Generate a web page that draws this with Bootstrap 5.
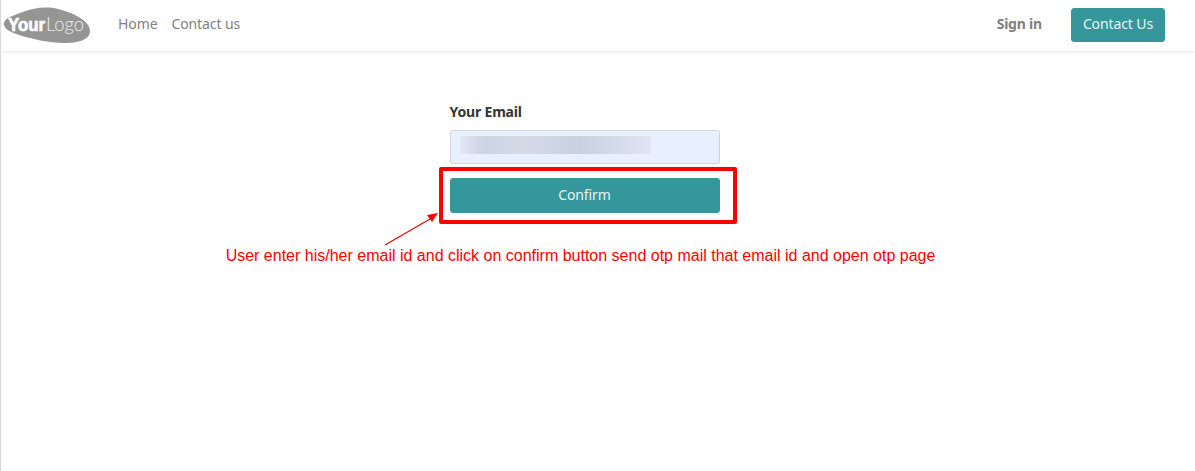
<!DOCTYPE html>
<html lang="en">
<head>
<meta charset="utf-8">
<title>Your Email</title>
<link href="https://cdn.jsdelivr.net/npm/bootstrap@5.3.0/dist/css/bootstrap.min.css" rel="stylesheet">
<style>
html,body{height:100%;overflow:hidden}
body{background:#fff;font-family:"Noto Sans",sans-serif;font-size:14px;color:#212529;border-left:1px solid #d8d8d8}
.top-bar{height:51px;padding:0 30px 0 0;box-shadow:0 1px 3px rgba(0,0,0,.1);background:#fff}
.logo-svg{display:block;width:90px;height:51px;flex:none}
.top-link{font-size:14px;line-height:20px;color:#808080;text-decoration:none;letter-spacing:-.1px;padding-bottom:4px}
.top-links{margin-left:27px;gap:14px}
.sign-link{font-size:14px;line-height:20px;font-weight:700;color:#808080;text-decoration:none;margin-right:29px;letter-spacing:-.2px;padding-bottom:4px}
.teal-btn{background:#35979c;border:1px solid #35979c;color:#e6f4f4;border-radius:3px;font-size:14px;letter-spacing:-.1px}
.teal-btn:hover{background:#35979c;border-color:#35979c;color:#e6f4f4}
.head-btn{width:94px;height:34px;padding:0 0 4px;margin-top:-1px}
.page-area{width:1167px;padding-top:50px}
.form-box{width:270px;position:relative}
.mail-label{display:block;font-size:14px;font-weight:700;line-height:21px;margin-bottom:8px;letter-spacing:-.17px;color:#333}
.mail-field{height:34px;padding:5px 9px;background:#e8f0fe;border:1px solid #cdd5e0;border-radius:3px;margin-bottom:14px}
.mail-blur{width:191px;height:18px;background:linear-gradient(90deg,#e2e8f3 0,#cdd5e2 12%,#d4dbe7 35%,#c9d1de 62%,#d6ddea 85%,#dfe6f2 100%);filter:blur(.6px)}
.confirm-btn{width:270px;height:35px;padding:0 0 2px;display:block}
.red-frame{position:absolute;left:-11px;top:66px;width:298px;height:57px;border:4px solid #f00;border-radius:2px;pointer-events:none}
.red-arrow{position:absolute;left:-70px;top:111px;width:62px;height:36px;overflow:visible}
.note-line{font-family:"Liberation Sans",sans-serif;font-size:16px;line-height:20px;color:#f00;white-space:nowrap;margin:33px 0 0 -8px}
.note-wrap{width:270px;display:flex;justify-content:center}
</style>
</head>
<body>
<nav class="top-bar d-flex align-items-center">
  <svg class="logo-svg" viewBox="1 0 90 51" role="img" aria-label="Your Logo">
    <path d="M4 23C5 18 12 16 20 13C32 8 46 6 58 9C74 13 90 21 90 31C90 40 78 43 64 43C48 43 34 39 22 36C12 33 3 29 4 23Z" fill="#959595"/>
    <text x="8" y="31" font-family="Liberation Sans, sans-serif" font-size="19" font-weight="700" stroke="#fff" stroke-width=".7" fill="#fff" textLength="37" lengthAdjust="spacingAndGlyphs">Your</text>
    <text x="46" y="31" font-family="Lato, sans-serif" font-size="20" font-weight="300" fill="#eeeeee" textLength="38" lengthAdjust="spacingAndGlyphs">Logo</text>
  </svg>
  <div class="top-links d-flex">
    <a class="top-link" href="#">Home</a>
    <a class="top-link" href="#">Contact us</a>
  </div>
  <div class="ms-auto d-flex align-items-center">
    <a class="sign-link" href="#">Sign in</a>
    <button class="btn teal-btn head-btn" type="button">Contact Us</button>
  </div>
</nav>
<main class="page-area d-flex flex-column align-items-center">
  <div class="form-box">
    <label class="mail-label">Your Email</label>
    <div class="mail-field"><div class="mail-blur"></div></div>
    <button class="btn teal-btn confirm-btn" type="button">Confirm</button>
    <div class="red-frame"></div>
    <svg class="red-arrow" viewBox="0 0 62 36">
      <line x1="5" y1="33" x2="50" y2="7" stroke="#f00" stroke-width="1.3"/>
      <polygon points="58,1 47,3 52,10" fill="#f00"/>
    </svg>
    <div class="note-wrap"><div class="note-line">User enter his/her email id and click on confirm button send otp mail that email id and open otp page</div></div>
  </div>
</main>
<script src="https://cdn.jsdelivr.net/npm/bootstrap@5.3.0/dist/js/bootstrap.bundle.min.js"></script>
</body>
</html>
